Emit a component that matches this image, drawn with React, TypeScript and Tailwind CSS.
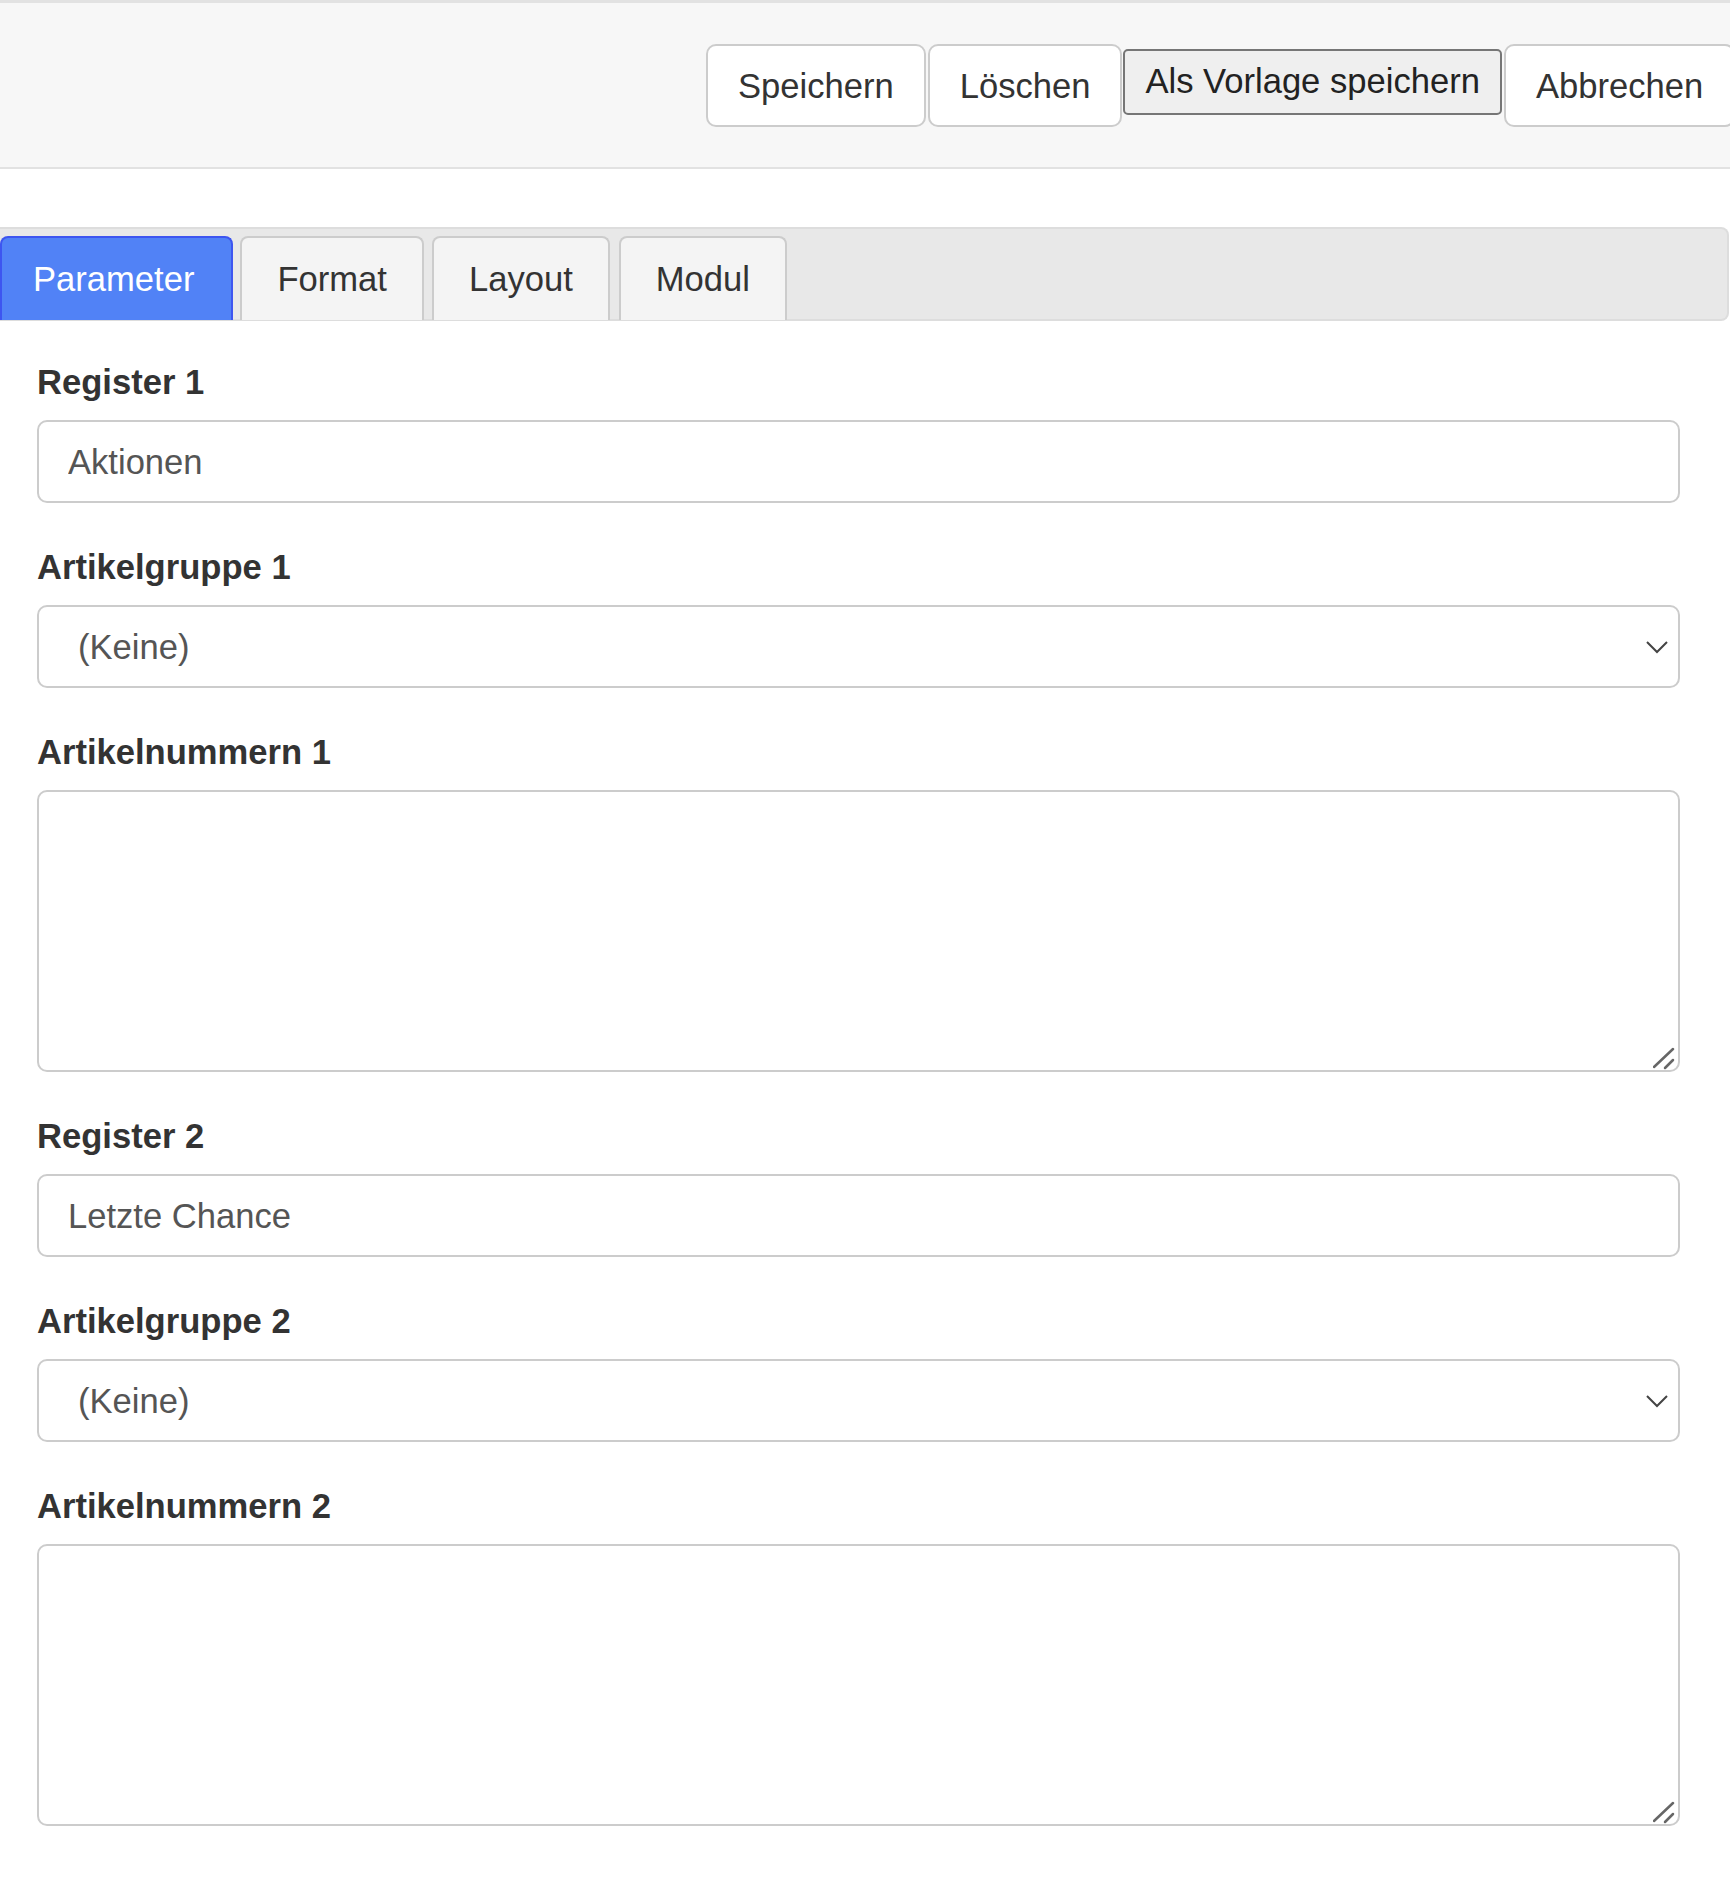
import { useState } from "react";

const TABS = ["Parameter", "Format", "Layout", "Modul"];
const TAB_GAPS = [0, 7, 8, 9];

const GROUPS = [
  { value: "", label: "(Keine)" },
  { value: "1", label: "Neuheiten" },
  { value: "2", label: "Sonderangebote" },
];

function Label({ children }: { children: React.ReactNode }) {
  return (
    <label className="block text-[34.6px] leading-[50px] font-bold text-[#333] mb-[13px]">
      {children}
    </label>
  );
}

function TextField({ label, value }: { label: string; value: string }) {
  return (
    <div className="mb-[39px]">
      <Label>{label}</Label>
      <input
        type="text"
        defaultValue={value}
        className="block w-full h-[83px] px-[29px] pt-[2px] text-[34.6px] text-[#555] bg-white border-2 border-[#ccc] rounded-[10px] outline-none"
      />
    </div>
  );
}

function SelectField({ label }: { label: string }) {
  return (
    <div className="mb-[39px]">
      <Label>{label}</Label>
      <div className="relative">
        <select
          defaultValue=""
          className="block w-full h-[83px] pl-[39px] pr-[60px] pt-[2px] text-[34.6px] text-[#555] bg-white border-2 border-[#ccc] rounded-[10px] outline-none appearance-none"
        >
          {GROUPS.map((g) => (
            <option key={g.value} value={g.value}>
              {g.label}
            </option>
          ))}
        </select>
        <svg
          className="absolute right-[12px] top-1/2 -translate-y-1/2 pointer-events-none"
          width="22"
          height="14"
          viewBox="0 0 22 14"
        >
          <path d="M1 2 L11 12 L21 2" fill="none" stroke="#444" strokeWidth="2" />
        </svg>
      </div>
    </div>
  );
}

function TextAreaField({ label }: { label: string }) {
  return (
    <div className="mb-[39px]">
      <Label>{label}</Label>
      <div className="relative">
        <textarea className="block w-full h-[282px] px-[29px] py-[15px] text-[34.6px] text-[#555] bg-white border-2 border-[#ccc] rounded-[10px] outline-none resize-none" />
        {/* resize grip */}
        <svg
          className="absolute right-[3px] bottom-[2px] pointer-events-none"
          width="24"
          height="24"
          viewBox="0 0 24 24"
        >
          <path d="M1 21 L20 3" stroke="#666" strokeWidth="2.5" strokeLinecap="round" />
          <path d="M12 22 L20 14" stroke="#666" strokeWidth="2.5" strokeLinecap="round" />
        </svg>
      </div>
    </div>
  );
}

export default function App() {
  const [tab, setTab] = useState("Parameter");

  return (
    <div
      className="w-[1730px] min-h-[1877px] overflow-hidden bg-white"
      style={{ fontFamily: '"Liberation Sans", Arial, sans-serif' }}
    >
      {/* Action bar */}
      <div className="bg-[#f7f7f7] border-t-[3px] border-b-2 border-[#e2e2e2] pt-[41px] pb-[40px] pl-[706px]">
        <div className="flex items-start whitespace-nowrap">
          <button className="h-[83px] px-[30px] pt-[2px] text-[34.6px] text-[#333] bg-white border-2 border-[#ccc] rounded-[10px] shrink-0">
            Speichern
          </button>
          <button className="ml-[2px] h-[83px] px-[30px] pt-[2px] text-[34.6px] text-[#333] bg-white border-2 border-[#ccc] rounded-[10px] shrink-0">
            Löschen
          </button>
          <button className="ml-px mt-[5px] h-[66px] px-[20px] text-[34.6px] text-[#222] bg-[#efefef] border-2 border-[#767676] rounded-[5px] shrink-0">
            Als Vorlage speichern
          </button>
          <button className="ml-[2px] h-[83px] px-[30px] pt-[2px] text-[34.6px] text-[#333] bg-white border-2 border-[#ccc] rounded-[10px] shrink-0">
            Abbrechen
          </button>
        </div>
      </div>

      {/* Tabs */}
      <div className="mt-[58px] w-[1729px] h-[94px] flex items-end bg-[#e8e8e8] border-2 border-l-0 border-[#dddddd] rounded-r-[8px]">
        {TABS.map((t, i) => {
          const active = t === tab;
          return (
            <button
              key={t}
              onClick={() => setTab(t)}
              className={
                active
                  ? "h-[84px] -mb-[1px] pl-[31px] pr-[37px] pt-[2px] text-[34.6px] text-white bg-[#5182f6] border-2 border-b-0 border-[#3d55f0] rounded-t-[8px]"
                  : "h-[84px] -mb-[1px] px-[35px] pt-[2px] text-[34.6px] text-[#333] bg-[#f4f4f4] border-2 border-b-0 border-[#cccccc] rounded-t-[8px]"
              }
              style={{ marginLeft: TAB_GAPS[i] }}
            >
              {t}
            </button>
          );
        })}
      </div>

      {/* Fields */}
      <div className="pt-[36px] pl-[37px] w-[1680px]">
        <TextField label="Register 1" value="Aktionen" />
        <SelectField label="Artikelgruppe 1" />
        <TextAreaField label="Artikelnummern 1" />
        <TextField label="Register 2" value="Letzte Chance" />
        <SelectField label="Artikelgruppe 2" />
        <TextAreaField label="Artikelnummern 2" />
      </div>
    </div>
  );
}
